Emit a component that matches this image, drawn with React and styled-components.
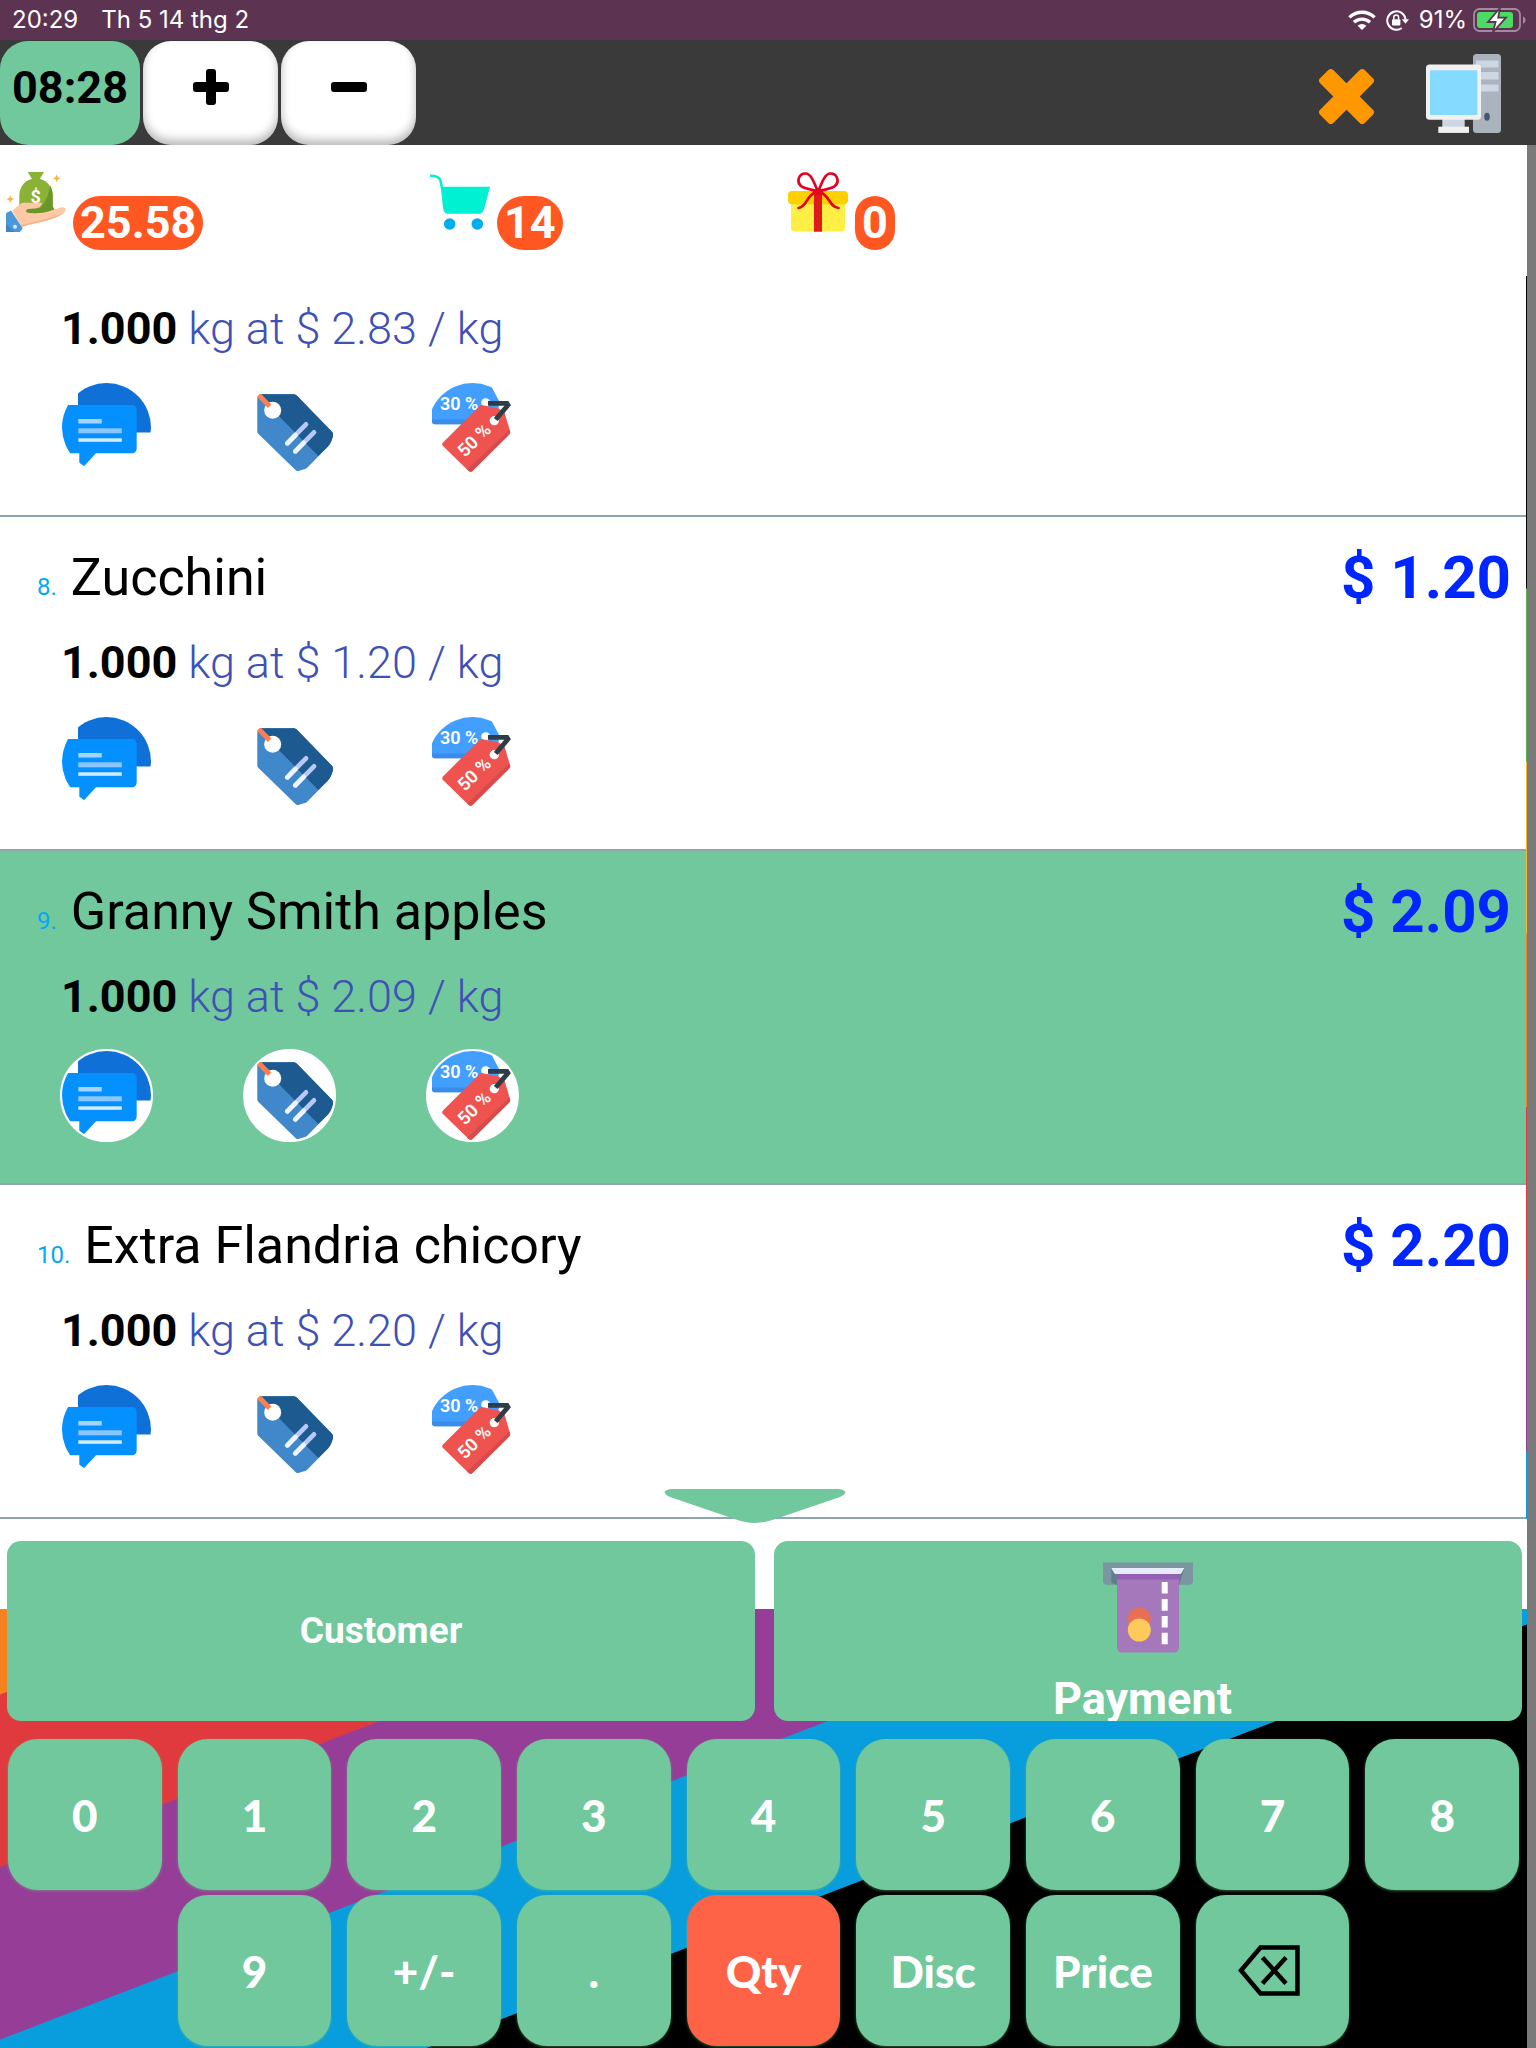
import React from "react";
import styled, { createGlobalStyle, css } from "styled-components";

const GREEN = "#70c89c";
const STRIPES = `linear-gradient(158.95deg,
  #000 1097px, #57b947 1098px 1259px, #fdb827 1260px 1419px, #f5821f 1420px 1581px,
  #e03a3e 1582px 1742px, #963d97 1743px 1903px, #089ddd 1904px 2064px, #000 2065px)`;

const GlobalStyle = createGlobalStyle`
  *, *::before, *::after { box-sizing: border-box; }
  body { margin: 0; font-family: Roboto, "Noto Sans", sans-serif; }
  button { border: 0; padding: 0; margin: 0; background: none; font: inherit; color: inherit; cursor: pointer; }
  svg { display: block; flex: none; }
  ul, p, h2 { margin: 0; padding: 0; list-style: none; }
`;

const Page = styled.div`
  background: ${STRIPES};
`;

const StatusBar = styled.header`
  display: flex;
  align-items: center;
  gap: 23px;
  height: 40px;
  padding: 0 10px 0 12px;
  background: #5c3350;
  color: #fff;
  font: 400 24px/40px Inter, sans-serif;
`;

const StatusIcons = styled.div`
  display: flex;
  align-items: center;
  gap: 10px;
  margin-left: auto;
`;

const Charge = styled.span`
  display: flex;
  align-items: center;
  gap: 6px;
`;

const Toolbar = styled.nav`
  display: flex;
  align-items: stretch;
  gap: 3px;
  height: 105px;
  padding: 1px 35px 0 0;
  background: #3a3a3a;
`;

const ToolButton = styled.button`
  display: flex;
  align-items: center;
  justify-content: center;
  width: 135px;
  padding-bottom: 12px;
  border-radius: 28px;
  background: #fff;
  box-shadow: inset 0 -5px 10px rgba(0, 0, 0, 0.28);
`;

const SessionButton = styled(ToolButton)`
  width: 140px;
  background: ${GREEN};
  box-shadow: none;
  font-size: 45px;
  font-weight: 700;
`;

const ToolLinks = styled.div`
  display: flex;
  align-items: center;
  gap: 52px;
  margin-left: auto;
`;

const Shell = styled.main`
  border-right: 9px solid #7a7a7a;
`;

const Stats = styled.section`
  display: grid;
  grid-template-columns: 424fr 358fr 739fr;
  height: 131px;
  padding: 27px 0 0 6px;
  background: #fff;
`;

const Stat = styled.div`
  display: flex;
  align-items: flex-start;
  gap: 7px;
`;

const Badge = styled.span`
  margin-top: 24px;
  padding: 0 7px;
  border-radius: 27px;
  background: #ff5722;
  color: #fff;
  font-size: 45px;
  font-weight: 700;
  line-height: 54px;
`;

const Lines = styled.ul`
  margin-right: 1px;
`;

const Line = styled.li`
  padding: 20px 15px 41px 0;
  border-bottom: 2px solid #8fa5ae;
  background: ${(p) => (p.$selected ? GREEN : "#fff")};
  ${(p) =>
    p.$clipped &&
    css`
      padding-top: 7px;
    `}
`;

const LineHead = styled.div`
  display: flex;
  align-items: center;
  justify-content: space-between;
  height: 80px;
  padding-left: 37px;
`;

const Name = styled.h2`
  font-size: 52px;
  font-weight: 400;
`;

const Index = styled.small`
  margin-right: 14px;
  color: #03a9f4;
  font-size: 24px;
`;

const Price = styled.span`
  color: #0026ff;
  font-size: 60px;
  font-weight: 700;
`;

const Detail = styled.p`
  margin-top: 16px;
  padding-left: 61px;
  color: #3f51b5;
  font-size: 45px;
  font-weight: 300;
  line-height: 60px;

  b {
    color: #000;
    font-weight: 700;
  }
`;

const Actions = styled.div`
  display: flex;
  gap: 90px;
  margin-top: 22px;
  padding-left: 60px;
`;

const RoundButton = styled.button`
  display: flex;
  align-items: center;
  justify-content: center;
  width: 93px;
  height: 93px;
  overflow: hidden;
  border: 2px solid #fff;
  border-radius: 50%;
  background: #fff;
`;

const Commands = styled.section`
  position: relative;
  display: grid;
  grid-template-columns: 1fr 1fr;
  gap: 19px;
  padding: 22px 5px 18px 7px;
  background: linear-gradient(#fff 90px, transparent 90px);
`;

const ScrollDown = styled.button`
  position: absolute;
  top: -30px;
  left: calc(50% - 100px);
`;

const Command = styled.button`
  display: flex;
  flex-direction: column;
  align-items: center;
  justify-content: ${(p) => (p.$tall ? "flex-start" : "center")};
  gap: 20px;
  height: 180px;
  padding-top: ${(p) => (p.$tall ? "21px" : "0")};
  overflow: hidden;
  border-radius: 14px;
  background: ${GREEN};
  color: #fff;
  font-size: ${(p) => (p.$tall ? "45px" : "37px")};
  font-weight: 700;
  line-height: 52px;
  white-space: pre;
`;

const Keypad = styled.section`
  display: grid;
  grid-template-columns: repeat(9, 1fr);
  gap: 5px 16px;
  padding: 0 8px 2px;
`;

const Key = styled.button`
  display: flex;
  align-items: center;
  justify-content: center;
  height: 151px;
  border-radius: 30px;
  background: ${(p) => (p.$active ? "#ff6347" : GREEN)};
  box-shadow: 0 1px 3px rgba(112, 200, 120, 0.5);
  color: #fff;
  font-family: Lato, sans-serif;
  font-size: 44px;
  font-weight: 900;

  &:nth-child(10) {
    grid-column-start: 2;
  }
`;

const WifiIcon = () => (
  <svg width="28" height="20" viewBox="0 0 28 20" aria-label="Wi-Fi">
    <g fill="none" stroke="#fff" strokeWidth="3.4">
      <path d="M1.4 7.4a18 18 0 0 1 25.2 0" />
      <path d="M6 12.3a11.6 11.6 0 0 1 16 0" />
    </g>
    <path d="M9.6 15.8a6.6 6.6 0 0 1 8.8 0L14 20z" fill="#fff" />
  </svg>
);

const RotationLockIcon = () => (
  <svg width="23" height="21" viewBox="0 0 23 21" aria-label="Rotation lock">
    <path d="M15.8 18A9.2 9.2 0 1 1 19.6 9.5" fill="none" stroke="#fff" strokeWidth="2" />
    <path d="M15.8 9.2H23l-3.6 4.6z" fill="#fff" />
    <rect x="6" y="9.2" width="8.4" height="6.4" rx="1" fill="#fff" />
    <path d="M7.8 9.5V7.4a2.4 2.4 0 0 1 4.8 0v2.1" fill="none" stroke="#fff" strokeWidth="1.5" />
  </svg>
);

const BatteryIcon = () => (
  <svg width="53" height="24" viewBox="0 0 53 24" aria-label="Charging">
    <rect x="1" y="1" width="46" height="22" rx="5.5" fill="none" stroke="#a5899d" strokeWidth="1.8" />
    <path d="M50 8.4c3.4 1.2 3.4 6.2 0 7.4z" fill="#a5899d" />
    <rect x="4" y="4" width="36" height="16" rx="3" fill="#4cd964" />
    <path d="M27 0 15 14h7.6L20 24l13-14.4h-7.8z" fill="#fff" stroke="#5c3350" strokeWidth="1.8" />
  </svg>
);

const PlusIcon = () => (
  <svg width="36" height="36" viewBox="0 0 36 36">
    <rect y="13" width="36" height="10" rx="3" />
    <rect x="13" width="10" height="36" rx="3" />
  </svg>
);

const MinusIcon = () => (
  <svg width="36" height="36" viewBox="0 0 36 36">
    <rect y="13" width="36" height="10" rx="3" />
  </svg>
);

const CloseIcon = () => (
  <svg width="55" height="61" viewBox="-27.5 -33.5 55 61" fill="#ff9800">
    <rect x="-31.5" y="-9.3" width="63" height="18.6" rx="3.5" transform="rotate(45)" />
    <rect x="-31.5" y="-9.3" width="63" height="18.6" rx="3.5" transform="rotate(-45)" />
  </svg>
);

const ComputerIcon = () => (
  <svg width="75" height="79" viewBox="0 0 75 79">
    <rect x="47" width="28" height="79" rx="3.5" fill="#abb4bd" />
    <g fill="#cfd6e3">
      <rect x="50" y="6.5" width="22.5" height="7" />
      <rect x="50" y="18" width="22.5" height="7.5" />
      <rect x="50" y="30.5" width="22.5" height="7" />
      <rect x="16.3" y="65" width="22.4" height="9" />
    </g>
    <ellipse cx="61" cy="62.7" rx="2.8" ry="4" fill="#3f5a6e" />
    <rect y="10.5" width="55" height="55.2" rx="3.5" fill="#f1f1f1" />
    <rect x="4" y="16.3" width="47.3" height="44.7" fill="#85dbff" />
    <rect x="12.3" y="72.7" width="30.7" height="6.2" fill="#f1f1f1" />
  </svg>
);

const MoneyIcon = () => (
  <svg width="60" height="60" viewBox="0 0 60 60">
    <path d="M21.7 0H38l-4.2 7H26z" fill="#8ab237" />
    <path d="M25.5 7h9c7 2 12.200 8.500 12.200 17v16.700H13.300V24C13.300 15.500 18 9 25.500 7z" fill="#8ab237" />
    <path d="M44 13.500c2 3 2.700 6.500 2.700 10.500v10l2 4-8 4H20V37l14-1C40 30 43 22 44 13.500z" fill="#6b9629" />
    <text x="29.700" y="31" fill="#fff" fontSize="18" fontWeight="700" textAnchor="middle">$</text>
    <path d="M6 38.500c4-2 7-7.800 12-7.800h18c0 4-4 5.500-8 5.800-4 .3-8 .2-8 2.500 0 1.500 2 2 5 2 14 1.200 20-3 30-5.500 4-.8 6 1.500 4 4-2 3-10 6.500-16 8.500-9 3-18 3.500-27 7z" fill="#ffc8a4" />
    <path d="M58 41c-3 2.500-10 5.300-15 7-9 3-18 3.500-27 7l-1-2c10-3 18-3.500 27-6.500 6-2 12-4 16-5.500z" fill="#f5b58c" />
    <path d="M0 41.300 5 38.500l11.700 17.800L14 60H0z" fill="#4a98d8" />
    <path d="M0 52l9 8H0z" fill="#3c84c2" />
    <circle cx="9" cy="54.700" r="2" fill="#d5e6f5" />
    <path d="M50.700 2.500l1.200 2.700 2.700 1.200-2.700 1.200-1.200 2.700-1.200-2.700-2.700-1.200 2.700-1.200zM4.300 23.200l1.200 2.700 2.700 1.200-2.700 1.200-1.200 2.700-1.200-2.700L.4 27.100l2.700-1.200z" fill="#fdb43a" />
  </svg>
);

const CartIcon = () => (
  <svg width="60" height="60" viewBox="0 0 60 60">
    <path d="M0 3.700c6 0 9.500.8 10.500 5l1.500 7.300" fill="none" stroke="#00f0d2" strokeWidth="2.500" />
    <path d="M10.700 14.700H60l-5.600 21c-1.200 4.400-2.400 6-6.400 6H19c-4 0-5.500-2-6-6z" fill="#00f0d2" />
    <circle cx="19.700" cy="52" r="5.800" fill="#00aeef" />
    <circle cx="47.300" cy="52" r="5.800" fill="#00aeef" />
  </svg>
);

const GiftIcon = () => (
  <svg width="60" height="60" viewBox="0 0 60 60">
    <rect x="3" y="24" width="54" height="35.500" rx="4" fill="#ffee44" />
    <rect y="19" width="60" height="13.300" rx="4" fill="#ffd000" />
    <rect x="26" y="20" width="8" height="39.700" fill="#ee1020" />
    <path d="M26 24l8 6M26 29l8 6M26 34l8 6M26 39l8 6M26 44l8 6M26 49l8 6M26 54l7 5" stroke="#b33a10" strokeWidth="1.100" />
    <g fill="none" stroke="#e6001f" strokeWidth="2.700" strokeLinecap="round">
      <path d="M30 20C26 10 23 1.500 17.500 1.500 11 1.500 8 9 13 14c4 3.500 12 3 17 6z" />
      <path d="M30 20c4-10 7-18.500 12.500-18.500C49 1.500 52 9 47 14c-4 3.500-12 3-17 6z" />
      <path d="M27 20.500c-9 4-8 14-16.500 15.500M33 20.500c9 4 8 14 17.500 15.500" />
    </g>
  </svg>
);

const ChatIcon = () => (
  <svg width="93" height="93" viewBox="0 0 93 93">
    <path d="M18 1.500h77V47c0 3-2 4.500-5 4.500H18z" fill="#0f70d7" />
    <path d="M0 24h72c3 0 4.700 2 4.700 5v38c0 3-1.700 5.300-4.700 5.300H36L23.500 85.700 19.300 82V72.300H0z" fill="#0590ff" />
    <rect x="18.300" y="38" width="23.500" height="4.500" fill="#a6d3ff" />
    <rect x="18.300" y="47.300" width="43.500" height="5" fill="#8cc6ff" />
    <rect x="18.300" y="57.300" width="43.500" height="3.500" fill="#d5ebff" />
  </svg>
);

const TagIcon = () => (
  <svg width="93" height="93" viewBox="0 0 93 93">
    <path d="M14.300 13.300H50c2 0 3 .5 4.500 2l34.500 35.500c3 3-.5 11-4 14.700L62 89c-3 2-7 2.500-9.500 0L15.500 53c-1-1-1.200-1.500-1.200-3z" fill="#4188ca" />
    <path d="M14.300 13.300H50c2 0 3 .5 4.500 2l34.500 35.500c3 3-.5 11-4 14.700l-9.700 9.500z" fill="#1d5a90" />
    <circle cx="29.700" cy="29.300" r="8.500" fill="#fff" />
    <path d="M14.300 12.500l12.300 12.800" stroke="#ff7f50" strokeWidth="5" />
    <g strokeWidth="4.700" strokeLinecap="round">
      <path d="M44.300 62.300L63 43.300M52.300 70.300l18.700-19" stroke="#b8c8fa" />
      <path d="M44.300 62.300l8.200-8.300M52.300 70.300l8.400-8.500" stroke="#f0f4ff" />
    </g>
  </svg>
);

const DiscountIcon = () => (
  <svg width="93" height="93" viewBox="0 0 93 93">
    <path d="M6 1.700h54c2.500 0 4 .8 5 3l8.500 16L70 43.300H9c-2 0-3-1-3-3z" fill="#439fff" />
    <path d="M6 38.500h60v4.800H9c-2 0-3-1-3-3z" fill="#3a8ce8" />
    <circle cx="59.700" cy="21.700" r="4.500" fill="#fff" />
    <text x="14" y="28.500" fill="#fff" fontSize="18" fontWeight="600">30 %</text>
    <path d="M53 25.500c1-1.300 2-1.700 4-1.300L75 28c2 .4 3 1.200 3.400 3L84 50c.4 1.700.2 2.600-1 3.800L46.500 90c-1.300 1.200-2.500 1.200-3.800 0L17 65c-1.200-1.200-1.200-2.400 0-3.600z" fill="#ef5350" />
    <path d="M83.500 48.500l.5 1.500c.4 1.700.2 2.600-1 3.800L46.500 90c-1.300 1.200-2.500 1.200-3.800 0l-1.700-1.500z" fill="#d64b4b" />
    <circle cx="68.300" cy="39.700" r="4.600" fill="#fff" />
    <circle cx="76" cy="26" r="3" fill="#fff" />
    <path d="M62 22.300h21.500L69.700 38.500" fill="none" stroke="#2f3e46" strokeWidth="4.800" strokeLinejoin="round" />
    <text transform="translate(39 77) rotate(-45)" fill="#fff" fontSize="18" fontWeight="600">50 %</text>
  </svg>
);

const PaymentIcon = () => (
  <svg width="90" height="91" viewBox="0 0 90 91">
    <path d="M0 .5h90v19c0 2-1.500 3.200-4 3.200H4c-2.500 0-4-1.200-4-3.200z" fill="#7a96a0" />
    <path d="M8.300 6.300h73l-5 16.400H13.500l-5.200-2z" fill="#5f808a" />
    <path d="M14 11h62v74c0 3.500-2 5.500-5 5.500H19c-3 0-5-2-5-5.500z" fill="#a578bc" />
    <path d="M14 11h62v6.500H14z" fill="#9460b5" />
    <path d="M8.300 6h73l-2.500 4.500c-.7 1.200-1.400 1.600-2.800 1.600H13.600c-1.400 0-2.100-.4-2.800-1.600z" fill="#e4ecfa" />
    <circle cx="36.300" cy="57" r="11.500" fill="#e76f55" />
    <circle cx="36.300" cy="68" r="11.500" fill="#ffca5a" />
    <path d="M61.700 20v11.500M61.700 37v11.700M61.700 54v11.500M61.700 70.700v11.500" stroke="#fff" strokeWidth="6" />
  </svg>
);

const BackspaceIcon = () => (
  <svg width="68" height="51" viewBox="0 0 68 51" fill="none" stroke="#000" strokeWidth="4.500">
    <path d="M3 25.500L22.500 2.500h37v46h-37z" />
    <path d="M24.500 12.500l23.500 26M48 12.500l-23.500 26" />
  </svg>
);

const TriangleIcon = () => (
  <svg width="182" height="34" viewBox="0 0 182 34">
    <path d="M10 0h162c10 0 13 4 4 8l-66 22.500c-13 4.500-25 4.500-38 0L6 8C-3 4 0 0 10 0z" fill={GREEN} />
  </svg>
);

const LINE_ACTIONS = [
  ["Note", ChatIcon],
  ["Price tag", TagIcon],
  ["Discount", DiscountIcon],
];

const ORDER = [
  { id: 7, price: "2.83", clipped: true },
  { id: 8, name: "Zucchini", price: "1.20" },
  { id: 9, name: "Granny Smith apples", price: "2.09", selected: true },
  { id: 10, name: "Extra Flandria chicory", price: "2.20" },
];

const KEYS = ["0", "1", "2", "3", "4", "5", "6", "7", "8", "9", "+/-", ".", "Qty", "Disc", "Price"];

function OrderLine({ id, name, price, selected, clipped }) {
  return (
    <Line $selected={selected} $clipped={clipped}>
      {!clipped && (
        <LineHead>
          <Name>
            <Index>{id}.</Index>
            {name}
          </Name>
          <Price>$ {price}</Price>
        </LineHead>
      )}
      <Detail>
        <b>1.000</b> kg at $ {price} / kg
      </Detail>
      <Actions>
        {LINE_ACTIONS.map(([label, Icon]) => (
          <RoundButton key={label} type="button" aria-label={label}>
            <Icon />
          </RoundButton>
        ))}
      </Actions>
    </Line>
  );
}

export default function App() {
  return (
    <Page>
      <GlobalStyle />
      <StatusBar>
        <span>20:29</span>
        <span>Th 5 14 thg 2</span>
        <StatusIcons>
          <WifiIcon />
          <RotationLockIcon />
          <Charge>
            91%
            <BatteryIcon />
          </Charge>
        </StatusIcons>
      </StatusBar>
      <Toolbar>
        <SessionButton type="button">08:28</SessionButton>
        <ToolButton type="button" aria-label="New order"><PlusIcon /></ToolButton>
        <ToolButton type="button" aria-label="Remove order"><MinusIcon /></ToolButton>
        <ToolLinks>
          <button type="button" aria-label="Close"><CloseIcon /></button>
          <button type="button" aria-label="Point of sale"><ComputerIcon /></button>
        </ToolLinks>
      </Toolbar>
      <Shell>
        <Stats>
          <Stat><MoneyIcon /><Badge>25.58</Badge></Stat>
          <Stat><CartIcon /><Badge>14</Badge></Stat>
          <Stat><GiftIcon /><Badge>0</Badge></Stat>
        </Stats>
        <Lines>
          {ORDER.map((line) => <OrderLine key={line.id} {...line} />)}
        </Lines>
        <Commands>
          <ScrollDown type="button" aria-label="Scroll down"><TriangleIcon /></ScrollDown>
          <Command type="button">Customer</Command>
          <Command type="button" $tall>
            <PaymentIcon />
            <span>{"Payment "}</span>
          </Command>
        </Commands>
        <Keypad>
          {KEYS.map((label) => (
            <Key key={label} type="button" $active={label === "Qty"}>{label}</Key>
          ))}
          <Key type="button" aria-label="Backspace"><BackspaceIcon /></Key>
        </Keypad>
      </Shell>
    </Page>
  );
}
